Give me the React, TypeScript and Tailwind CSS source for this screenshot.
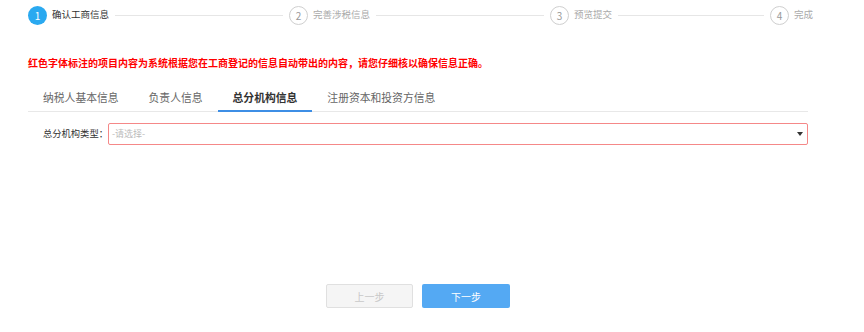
import React from 'react'

const font = { fontFamily: '"Noto Sans CJK SC", "Noto Sans", sans-serif' }

const steps = [
  { no: 1, label: '确认工商信息', line: 'w-[168px]' },
  { no: 2, label: '完善涉税信息', line: 'w-[168px]' },
  { no: 3, label: '预览提交', line: 'w-[146px]' },
  { no: 4, label: '完成', line: '' },
]

const tabs = ['纳税人基本信息', '负责人信息', '总分机构信息', '注册资本和投资方信息']

export default function App() {
  const current = 1
  const activeTab = 2

  return (
    <div className="w-[864px] h-[332px] bg-white pl-[28px] pr-[56px]" style={font}>
      {/* Steps */}
      <div className="flex items-center h-[30px] whitespace-nowrap">
        {steps.map((s) => (
          <div key={s.no} className="flex items-center shrink-0">
            {s.no === current ? (
              <div className="shrink-0 w-[19px] h-[19px] rounded-full bg-[#2aa9f0] text-white text-[10px] flex items-center justify-center">
                {s.no}
              </div>
            ) : (
              <div className="shrink-0 w-[19px] h-[19px] rounded-full border border-[#cfcfcf] bg-white text-[#999] text-[10px] flex items-center justify-center">
                {s.no}
              </div>
            )}
            <span
              className={`ml-[5px] shrink-0 text-[9.5px] leading-none ${
                s.no === current ? 'text-[#333]' : 'text-[#aaa]'
              }`}
            >
              {s.label}
            </span>
            {s.line && <div className={`shrink-0 mx-[6px] h-px bg-[#e6e6e6] ${s.line}`} />}
          </div>
        ))}
      </div>

      {/* Notice */}
      <p className="mt-[26px] text-[10px] leading-[14px] font-bold text-[#ff0000]">
        红色字体标注的项目内容为系统根据您在工商登记的信息自动带出的内容，请您仔细核以确保信息正确。
      </p>

      {/* Tabs */}
      <div className="mt-[14px] flex border-b border-[#e8e8e8] whitespace-nowrap">
        {tabs.map((t, i) => (
          <div
            key={t}
            className={`-mb-px h-[28px] px-[15px] flex items-center text-[10.8px] border-b-2 ${
              i === activeTab
                ? 'border-[#3d8ee5] text-[#333] font-bold'
                : 'border-transparent text-[#666]'
            }`}
          >
            {t}
          </div>
        ))}
      </div>

      {/* Form row */}
      <div className="mt-[11px] flex items-center">
        <label className="w-[80px] shrink-0 whitespace-nowrap text-right text-[9.3px] text-[#333]">总分机构类型：</label>
        <div className="flex-1 h-[22px] border border-[#f58888] rounded-[2px] flex items-center justify-between pl-[3px] pr-[4px]">
          <span className="text-[9px] text-[#bbb]">-请选择-</span>
          <span className="w-0 h-0 border-l-[3px] border-r-[3px] border-t-[4px] border-l-transparent border-r-transparent border-t-[#333]" />
        </div>
      </div>

      {/* Buttons */}
      <div className="mt-[139px] flex justify-center gap-[9px]">
        <button className="w-[87px] h-[24px] bg-[#f5f5f5] border border-[#e0e0e0] rounded-[2px] text-[10px] text-[#c8c8c8]">
          上一步
        </button>
        <button className="w-[88px] h-[24px] bg-[#54a9f3] rounded-[2px] text-[10px] text-white">
          下一步
        </button>
      </div>
    </div>
  )
}
